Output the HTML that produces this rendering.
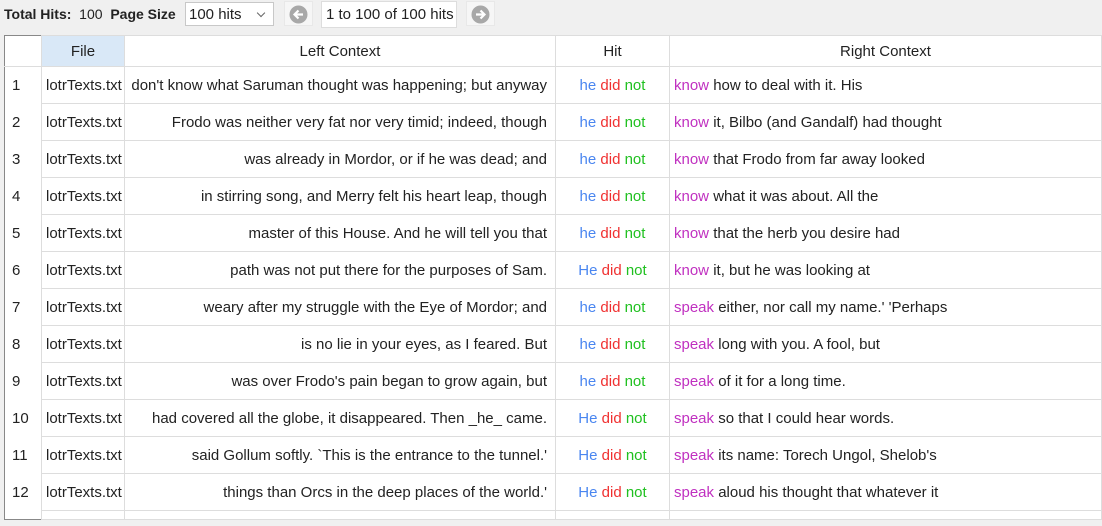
<!DOCTYPE html>
<html><head><style>
body{margin:0;width:1102px;height:526px;background:#f0f0f0;font-family:"Liberation Sans",sans-serif;font-size:15px;color:#222;overflow:hidden;position:relative}
.tb{position:absolute;top:6px;left:4px;font-size:14px;white-space:nowrap}
.b{font-weight:bold}
.sel{position:absolute;left:185px;top:2px;width:89px;height:24px;background:#fff;border:1px solid #c8c8c8;box-sizing:border-box;padding:3px 0 0 3px}
.sel:after{content:"";position:absolute;right:9px;top:7px;width:5px;height:5px;border-right:1px solid #666;border-bottom:1px solid #666;transform:rotate(45deg)}
.btn{position:absolute;top:1px;width:29px;height:25px;background:#f6f6f6;border:1px solid #e8e8e8;box-sizing:border-box}
.btn svg{position:absolute;left:4px;top:3px}
.pg{position:absolute;left:321px;top:1px;width:136px;height:27px;background:#fff;border:1px solid #ddd;box-sizing:border-box;padding:4px 0 0 4px}
table{position:absolute;left:4px;top:35px;width:1098px;height:485px;border-collapse:collapse;background:#fff;border:1px solid #888;table-layout:fixed}
td,th{border:1px solid #ddd;font-weight:normal;height:36px;padding:0 4px;white-space:nowrap;overflow:hidden}
th{height:30px;text-align:center}
td.n{border-left:none;border-top:none;border-bottom:none;padding-left:7px}
.l{text-align:right;padding-right:8px}.c{text-align:center}
.h{color:#4a86f0}.d{color:#f03030}.o{color:#20c020}.k{color:#c030c0}
tr.last td{height:8px}
</style></head><body>
<div class="tb"><span class="b">Total Hits:</span>&nbsp; 100&nbsp; <span class="b">Page Size</span></div>
<div class="sel">100 hits</div>
<div class="btn" style="left:284px"><svg width="19" height="19" viewBox="0 0 19 19"><circle cx="9.5" cy="9.5" r="9" fill="#a8a8a8"/><path d="M14 9.5H6M9.5 5.5L5.5 9.5L9.5 13.5" stroke="#fff" stroke-width="2.2" fill="none"/></svg></div>
<div class="pg">1 to 100 of 100 hits</div>
<div class="btn" style="left:466px"><svg width="19" height="19" viewBox="0 0 19 19"><circle cx="9.5" cy="9.5" r="9" fill="#a8a8a8"/><path d="M5 9.5H13M9.5 5.5L13.5 9.5L9.5 13.5" stroke="#fff" stroke-width="2.2" fill="none"/></svg></div>
<table>
<colgroup><col style="width:37px"><col style="width:83px"><col style="width:431px"><col style="width:114px"><col></colgroup>
<tr><th style="border-top:none;border-left:none"></th><th style="background:#d9e8f7">File</th><th>Left Context</th><th>Hit</th><th>Right Context</th></tr>
<tr><td class="n">1</td><td>lotrTexts.txt</td><td class="l">don't know what Saruman thought was happening; but anyway</td><td class="c"><span class="h">he</span> <span class="d">did</span> <span class="o">not</span></td><td><span class="k">know</span> how to deal with it. His</td></tr>
<tr><td class="n">2</td><td>lotrTexts.txt</td><td class="l">Frodo was neither very fat nor very timid; indeed, though</td><td class="c"><span class="h">he</span> <span class="d">did</span> <span class="o">not</span></td><td><span class="k">know</span> it, Bilbo (and Gandalf) had thought</td></tr>
<tr><td class="n">3</td><td>lotrTexts.txt</td><td class="l">was already in Mordor, or if he was dead; and</td><td class="c"><span class="h">he</span> <span class="d">did</span> <span class="o">not</span></td><td><span class="k">know</span> that Frodo from far away looked</td></tr>
<tr><td class="n">4</td><td>lotrTexts.txt</td><td class="l">in stirring song, and Merry felt his heart leap, though</td><td class="c"><span class="h">he</span> <span class="d">did</span> <span class="o">not</span></td><td><span class="k">know</span> what it was about. All the</td></tr>
<tr><td class="n">5</td><td>lotrTexts.txt</td><td class="l">master of this House. And he will tell you that</td><td class="c"><span class="h">he</span> <span class="d">did</span> <span class="o">not</span></td><td><span class="k">know</span> that the herb you desire had</td></tr>
<tr><td class="n">6</td><td>lotrTexts.txt</td><td class="l">path was not put there for the purposes of Sam.</td><td class="c"><span class="h">He</span> <span class="d">did</span> <span class="o">not</span></td><td><span class="k">know</span> it, but he was looking at</td></tr>
<tr><td class="n">7</td><td>lotrTexts.txt</td><td class="l">weary after my struggle with the Eye of Mordor; and</td><td class="c"><span class="h">he</span> <span class="d">did</span> <span class="o">not</span></td><td><span class="k">speak</span> either, nor call my name.' 'Perhaps</td></tr>
<tr><td class="n">8</td><td>lotrTexts.txt</td><td class="l">is no lie in your eyes, as I feared. But</td><td class="c"><span class="h">he</span> <span class="d">did</span> <span class="o">not</span></td><td><span class="k">speak</span> long with you. A fool, but</td></tr>
<tr><td class="n">9</td><td>lotrTexts.txt</td><td class="l">was over Frodo's pain began to grow again, but</td><td class="c"><span class="h">he</span> <span class="d">did</span> <span class="o">not</span></td><td><span class="k">speak</span> of it for a long time.</td></tr>
<tr><td class="n">10</td><td>lotrTexts.txt</td><td class="l">had covered all the globe, it disappeared. Then _he_ came.</td><td class="c"><span class="h">He</span> <span class="d">did</span> <span class="o">not</span></td><td><span class="k">speak</span> so that I could hear words.</td></tr>
<tr><td class="n">11</td><td>lotrTexts.txt</td><td class="l">said Gollum softly. `This is the entrance to the tunnel.'</td><td class="c"><span class="h">He</span> <span class="d">did</span> <span class="o">not</span></td><td><span class="k">speak</span> its name: Torech Ungol, Shelob's</td></tr>
<tr><td class="n">12</td><td>lotrTexts.txt</td><td class="l">things than Orcs in the deep places of the world.'</td><td class="c"><span class="h">He</span> <span class="d">did</span> <span class="o">not</span></td><td><span class="k">speak</span> aloud his thought that whatever it</td></tr>
<tr class="last"><td class="n"></td><td></td><td></td><td></td><td></td></tr>
</table>
</body></html>
